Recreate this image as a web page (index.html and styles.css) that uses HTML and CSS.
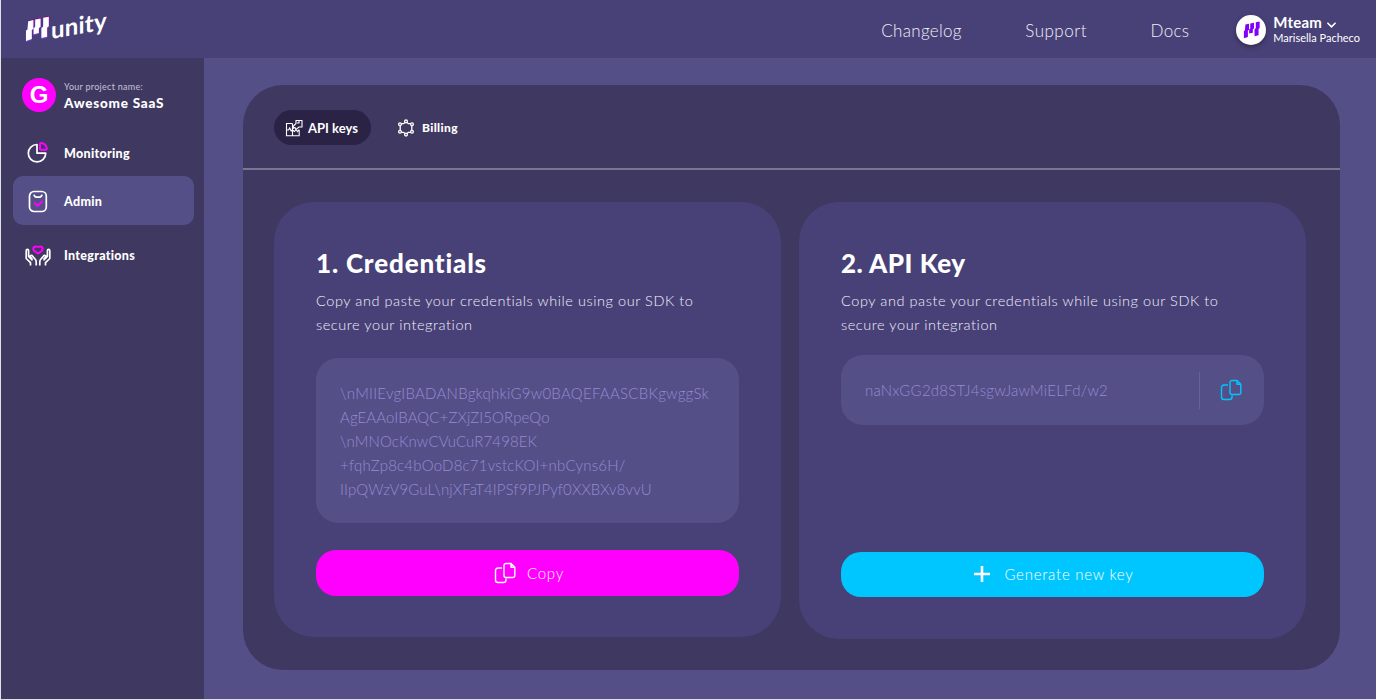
FILE: index.html
```
<!DOCTYPE html>
<html lang="en">
<head>
<meta charset="utf-8">
<title>Munity – API keys</title>
<link rel="stylesheet" href="styles.css">
</head>
<body>
<svg class="defs" width="0" height="0" aria-hidden="true">
  <symbol id="copy" viewBox="0 0 22 22">
    <path d="M8 6H4a2.500 2.500 0 0 0-2.500 2.500v9.500a2.500 2.500 0 0 0 2.500 2.500h5.500a2.500 2.500 0 0 0 2.500-2.500v-1.500M12.500 1.500H17l3.800 3.800V13.500a2 2 0 0 1-2 2h-6.800a2 2 0 0 1-2-2v-10a2 2 0 0 1 2-2zM17 1.500v3.800h3.800" fill="none" stroke="currentColor" stroke-width="1.400" stroke-linejoin="round"/>
  </symbol>
  <symbol id="bars" viewBox="0 0 24 26" overflow="visible">
    <path d="M3.200 5.200 8.400 4v8.500L6.800 14v9L1 25V14.500l1.500-1zM10.200 3.600 15.600 2.600v8.200L13.900 12v5L8.600 18.200v-6l1.600-1.400zM18.200 1.800 23.800.8v9.400l-1.600 1.200v9.300L16.400 22V12l1.800-1.500z"/>
  </symbol>
</svg>
<header class="topbar">
  <a class="logo">
    <svg class="logo-mark" viewBox="0 0 24 26"><use href="#bars" class="glow-a" x="0.600" y="-1"/><use href="#bars" class="glow-b" x="-0.200" y="1"/><use href="#bars" class="face"/></svg>
    <span class="logo-text">unity</span>
  </a>
  <nav class="links"><a>Changelog</a><a class="wide">Support</a><a>Docs</a></nav>
  <div class="account">
    <span class="avatar"><svg viewBox="0 0 24 26"><use href="#bars"/></svg></span>
    <div class="who">
      <div class="team">Mteam <svg class="chev" viewBox="0 0 10 6"><path d="M1 1l4 4 4-4"/></svg></div>
      <div class="user">Marisella Pacheco</div>
    </div>
  </div>
</header>
<div class="body">
  <aside class="side">
    <div class="project">
      <span class="badge">G</span>
      <div><div class="label">Your project name:</div><div class="name">Awesome SaaS</div></div>
    </div>
    <a class="item monitoring"><svg viewBox="0 0 28 24"><path d="M13 2.500a8.700 8.700 0 1 0 8.700 8.700H13z"/><path class="pink" d="M16 2c0-.7.500-1 1.200-1 3 .3 5.300 2.500 5.600 5.600 0 .8-.4 1.200-1 1.200H17c-.7 0-1-.4-1-1z"/></svg><span>Monitoring</span></a>
    <a class="item admin active"><svg viewBox="0 0 28 24"><rect x="5.500" y="2.500" width="16.800" height="20" rx="4.500"/><path d="M10 5.700c.3 2 1.400 2.400 2.500 2.400h3c1.100 0 2.200-.4 2.500-2.400"/><path class="pink" d="M10.300 13.800l3.200 3 5-4.500"/></svg><span>Admin</span></a>
    <a class="item integrations"><svg viewBox="0 0 28 24"><path d="M6.500 21.500v-2.800L2.200 14.500V6.800q0-1.500 1.200-1.500t1.200 1.500v5.500l4 4M8.500 15.500 6.300 12.800q-.3-1.600 1.500-1.500l3.600 4.200q.8.900.8 2.500v3.500M21.500 21.500v-2.800l4.300-4.200V6.800q0-1.500-1.200-1.500t-1.200 1.500v5.500l-4 4M19.500 15.500l2.200-2.700q.3-1.600-1.500-1.500l-3.600 4.200q-.8.900-.8 2.500v3.500"/><path class="pink" d="M14 9.500 10 6.700q-1.500-2.500.3-3.800 1.200-.7 3.700 0 2.500-.7 3.700 0 1.800 1.300.3 3.800z"/></svg><span>Integrations</span></a>
  </aside>
  <main class="main">
    <section class="panel">
      <div class="tabs">
        <a class="tab on"><svg viewBox="0 0 18 18"><path d="M7.500 4.500H1.500v12.300h12.700V11M1.500 11h2l1.200-2 1.500 3 1.300-1.500M7.500 4.500v12.300M7.500 11l2 1.500 1.500-2 1.500 2 1.700-2M11 4.500V1.500h6v6.500h-3l-3 2.500-1-2-2 1 .5-2.500zM14 1.500v2.500h-2"/></svg><span>API keys</span></a>
        <a class="tab second-tab"><svg viewBox="0 0 18 18"><path d="M9 2.400 11.300 4.700h3.500v8.600h-3.500L9 15.600l-2.300-2.300H3.200V4.700h3.500z"/><g><circle cx="9" cy="2.400" r="1.400"/><circle cx="15" cy="5.200" r="1.400"/><circle cx="15" cy="12.800" r="1.400"/><circle cx="9" cy="15.600" r="1.400"/><circle cx="3" cy="12.800" r="1.400"/><circle cx="3" cy="5.200" r="1.400"/></g></svg><span class="billing">Billing</span></a>
      </div>
      <div class="cards">
        <article class="card">
          <h2 class="wide-title">1. Credentials</h2>
          <p>Copy and paste your credentials while using our SDK to<br>secure your integration</p>
          <div class="code"><div class="c1">\nMIIEvgIBADANBgkqhkiG9w0BAQEFAASCBKgwggSk</div><div class="c2">AgEAAoIBAQC+ZXjZI5ORpeQo</div><div class="c2">\nMNOcKnwCVuCuR7498EK</div><div class="c4">+fqhZp8c4bOoD8c71vstcKOI+nbCyns6H/</div><div class="c5">IIpQWzV9GuL\njXFaT4IPSf9PJPyf0XXBXv8vvU</div></div>
          <button class="btn pinkbtn"><svg><use href="#copy"/></svg><span>Copy</span></button>
        </article>
        <article class="card second">
          <h2>2. API Key</h2>
          <p>Copy and paste your credentials while using our SDK to<br>secure your integration</p>
          <div class="key"><span>naNxGG2d8STJ4sgwJawMiELFd/w2</span><a class="copykey"><svg><use href="#copy"/></svg></a></div>
          <button class="btn bluebtn"><svg class="plus" viewBox="0 0 16 16"><path d="M8 0v16M0 8h16"/></svg><span>Generate new key</span></button>
        </article>
      </div>
    </section>
  </main>
</div>
</body>
</html>
```
FILE: styles.css
```
* { box-sizing: border-box; }
body { margin: 0; height: 700px; overflow: hidden; background: #554f87; border-left: 1px solid #dfe0e4; border-bottom: 1px solid #dfe0e4; font-family: Lato, sans-serif; color: #fff; display: flex; flex-direction: column; }
.defs { position: absolute; }
.topbar { height: 58px; flex: none; background: #484177; display: flex; align-items: center; padding: 0 16px 0 24px; }
.logo { display: flex; align-items: center; gap: 2px; }
.logo-mark { width: 24px; height: 26px; overflow: visible; }
.face { fill: #fff; }
.glow-a { fill: #8c008e; }
.glow-b { fill: #7545e8; }
.logo-text { font-size: 24px; line-height: 30px; font-weight: 700; letter-spacing: .2px; transform: translateY(-4px) skewY(-10deg); }
.links { margin-left: auto; display: flex; gap: 63.5px; font-size: 17px; line-height: 24px; font-weight: 300; margin-top: 4px; letter-spacing: .3px; color: #f0eef8; }
.wide { letter-spacing: .5px; }
.account { display: flex; align-items: center; gap: 7px; margin: 1px 0 0 47px; }
.avatar { width: 30px; height: 30px; border-radius: 50%; background: #fff; display: flex; align-items: center; justify-content: center; box-shadow: 0 2px 5px #0005; margin-top: 1px; }
.avatar svg { width: 17px; height: 18px; fill: #8200f5; }
.who { margin-top: -2px; }
.team { font-size: 15px; line-height: 17px; font-weight: 700; letter-spacing: .2px; }
.chev { width: 9px; height: 6px; margin-left: 1px; overflow: visible; }
.chev path { fill: none; stroke: #fff; stroke-width: 1.8; stroke-linecap: round; }
.user { font-size: 11px; line-height: 13px; white-space: nowrap; }
.body { display: flex; flex: 1; min-height: 0; }
.side { width: 203px; flex: none; background: #3f3961; padding: 20px 10px 0 12px; }
.project { display: flex; align-items: center; gap: 8px; padding-left: 9px; height: 34px; }
.badge { width: 34px; height: 34px; border-radius: 50%; background: #f0f; display: flex; align-items: center; justify-content: center; font: 700 24px/34px "Liberation Sans", sans-serif; }
.label { font-size: 9px; line-height: 12px; color: #c5c1d6; margin-top: 4px; letter-spacing: .28px; }
.name { font-size: 13.5px; line-height: 20px; font-weight: 900; letter-spacing: .75px; white-space: nowrap; }
.item { display: flex; align-items: center; padding-left: 11px; height: 49px; border-radius: 10px; gap: 12px; font-size: 12.5px; font-weight: 900; letter-spacing: .3px; }
.item svg { width: 28px; height: 24px; fill: none; stroke: #fff; stroke-width: 1.700; stroke-linejoin: round; }
.item .pink { stroke: #f0f; stroke-width: 2; }
.monitoring { margin-top: 17px; }
.active { background: #554f87; margin-top: -2px; }
.active span { padding-top: 1px; }
.integrations { margin-top: 6px; }
.main { flex: 1; padding: 27px 35px 0 39px; }
.panel { width: 1097px; height: 585px; background: #3f3961; border-radius: 40px; }
.tabs { height: 85px; border-bottom: 2px solid #7a7590; padding: 25px 31px 0; display: flex; gap: 27px; }
.tab { display: flex; align-items: center; height: 35px; font-size: 13px; font-weight: 700; gap: 5px; }
.tab svg { width: 18px; height: 18px; fill: none; stroke: #fff; stroke-width: 1.1; }
.second-tab svg { stroke-width: 1.3; margin-left: -1px; }
.tab g { fill: #3f3961; }
.tab.on { background: #2a2346; border-radius: 18px; padding: 0 13px 0 11px; }
.billing { font-size: 12px; font-weight: 900; margin-left: 2px; letter-spacing: .4px; }
.cards { display: flex; gap: 18px; padding: 31.5px 31px 0; }
.card { width: 507px; height: 435.5px; border-radius: 40px; background: #484177; padding: 42.5px 42px 0; }
.second { height: 437px; }
h2 { margin: 0; font-size: 26px; line-height: 38px; font-weight: 900; letter-spacing: .5px; }
.wide-title { letter-spacing: .83px; }
p { margin: 7px 0 0; font-size: 14.500px; line-height: 24px; color: #f2f0fa; letter-spacing: .57px; font-weight: 300; white-space: nowrap; }
.code { margin-top: 21px; height: 165px; border-radius: 22px; background: #554f87; color: #938bd2; padding: 23px 24px 0; font-size: 15px; font-weight: 300; line-height: 24px; white-space: nowrap; }
.c1 { letter-spacing: .26px; }
.c2 { letter-spacing: .1px; }
.c4 { letter-spacing: .22px; }
.c5 { letter-spacing: .13px; }
.btn { display: flex; align-items: center; justify-content: center; width: 423px; height: 46px; border: 0; border-radius: 20px; color: #fff; font: 300 15px Lato, sans-serif; letter-spacing: .8px; padding: 0 0 0 3px; }
.pinkbtn { background: #f0f; margin-top: 27px; gap: 11px; }
.btn svg { width: 22px; height: 22px; }
.bluebtn { background: #00c6ff; margin-top: 126.5px; gap: 14px; height: 45px; letter-spacing: .74px; }
.btn .plus { width: 16px; height: 16px; stroke: #fff; stroke-width: 2.600; }
.key { margin-top: 18px; height: 70px; border-radius: 22px; background: #554f87; color: #938bd2; font-size: 15px; font-weight: 300; letter-spacing: .24px; display: flex; align-items: center; justify-content: space-between; padding-left: 24px; }
.copykey { width: 65px; height: 37px; border-left: 1px solid #68629a; color: #00c6ff; display: flex; align-items: center; padding-left: 20px; }
.copykey svg { width: 22px; height: 22px; }
```
